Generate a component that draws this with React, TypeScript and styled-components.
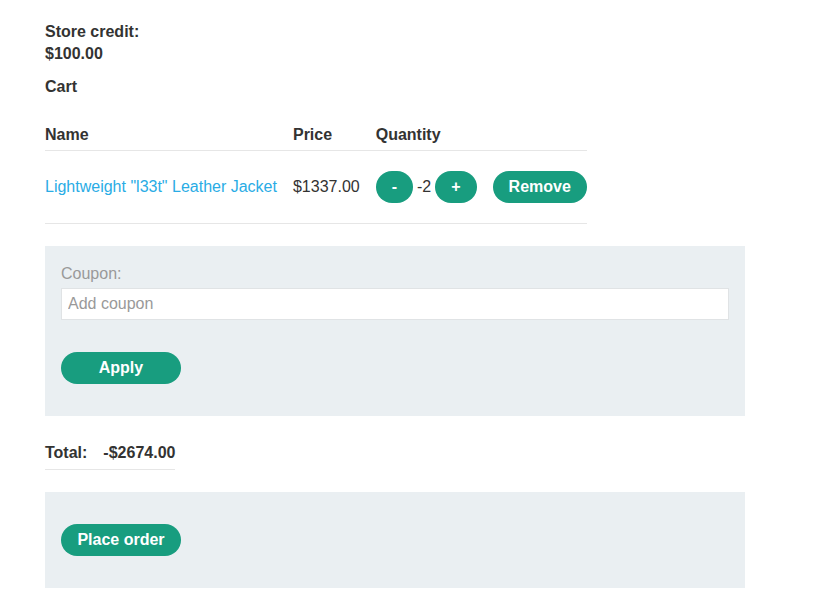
import React from "react";
import styled, { createGlobalStyle } from "styled-components";

const Global = createGlobalStyle`
  html, body { margin: 0; padding: 0; background: #fff; }
  body { font-family: "Liberation Sans", Arial, sans-serif; font-size: 16px; color: #333332; }
  * { box-sizing: border-box; }
`;

const Page = styled.div`
  padding: 21px 0 24px 45px;
  width: 745px;
`;

const Credit = styled.div`
  font-weight: 700;
  line-height: 22px;
  width: 120px;
`;

const Heading = styled.div`
  font-weight: 700;
  line-height: 22px;
  margin-top: 11px;
`;

const CartTable = styled.table`
  border-collapse: collapse;
  margin-top: 21px;
  line-height: 22px;
`;

const Th = styled.th`
  text-align: left;
  font-weight: 700;
  padding: 5px 16px 4px 0;
  border-bottom: 1px solid #e6e6e6;
  &:last-child { padding-right: 0; }
`;

const Td = styled.td`
  padding: 20px 16px 20px 0;
  border-bottom: 1px solid #e6e6e6;
  white-space: nowrap;
  vertical-align: middle;
  &:last-child { padding-right: 0; }
`;

const ProductLink = styled.a`
  color: #29ace5;
  text-decoration: none;
`;

const Qty = styled.div`
  display: flex;
  align-items: center;
  gap: 4px;
`;

const Pill = styled.button<{ $wide?: boolean }>`
  display: inline-flex;
  align-items: center;
  justify-content: center;
  height: 32px;
  padding: 0 16px;
  min-width: ${(p) => (p.$wide ? "120px" : "0")};
  border: none;
  border-radius: 16px;
  background: #189d7f;
  color: #fff;
  font-family: "Liberation Sans", Arial, sans-serif;
  font-size: 16px;
  font-weight: 700;
  cursor: pointer;
`;

const GreyBox = styled.div<{ $top: number; $pt: number; $pb: number }>`
  width: 700px;
  background: #eaeff2;
  margin-top: ${(p) => p.$top}px;
  padding: ${(p) => p.$pt}px 16px ${(p) => p.$pb}px 16px;
`;

const Label = styled.label`
  display: block;
  color: #999;
  line-height: 22px;
`;

const Input = styled.input`
  display: block;
  width: 100%;
  height: 32px;
  margin-top: 3px;
  padding: 0 6px;
  border: 1px solid #e0e3e5;
  background: #fff;
  font-family: "Liberation Sans", Arial, sans-serif;
  font-size: 16px;
  color: #333332;
  outline: none;
  &::placeholder { color: #999; }
`;

const ApplyRow = styled.div`
  margin-top: 32px;
`;

const TotalTable = styled.table`
  border-collapse: collapse;
  margin-top: 20px;
  line-height: 22px;
  font-weight: 700;
`;

const TotalCell = styled.td`
  padding: 6px 16px 5px 0;
  border-bottom: 1px solid #e6e6e6;
  &:last-child { padding-right: 0; }
`;

export default function App() {
  return (
    <>
      <Global />
      <Page>
        <Credit>Store credit: $100.00</Credit>
        <Heading>Cart</Heading>
        <CartTable>
          <thead>
            <tr>
              <Th>Name</Th>
              <Th>Price</Th>
              <Th>Quantity</Th>
              <Th></Th>
            </tr>
          </thead>
          <tbody>
            <tr>
              <Td>
                <ProductLink href="#">Lightweight "l33t" Leather Jacket</ProductLink>
              </Td>
              <Td>$1337.00</Td>
              <Td>
                <Qty>
                  <Pill>-</Pill>
                  <span>-2</span>
                  <Pill>+</Pill>
                </Qty>
              </Td>
              <Td>
                <Pill>Remove</Pill>
              </Td>
            </tr>
          </tbody>
        </CartTable>
        <GreyBox $top={22} $pt={17} $pb={32}>
          <Label>Coupon:</Label>
          <Input placeholder="Add coupon" />
          <ApplyRow>
            <Pill $wide>Apply</Pill>
          </ApplyRow>
        </GreyBox>
        <TotalTable>
          <tbody>
            <tr>
              <TotalCell>Total:</TotalCell>
              <TotalCell>-$2674.00</TotalCell>
            </tr>
          </tbody>
        </TotalTable>
        <GreyBox $top={22} $pt={32} $pb={32}>
          <Pill $wide>Place order</Pill>
        </GreyBox>
      </Page>
    </>
  );
}
